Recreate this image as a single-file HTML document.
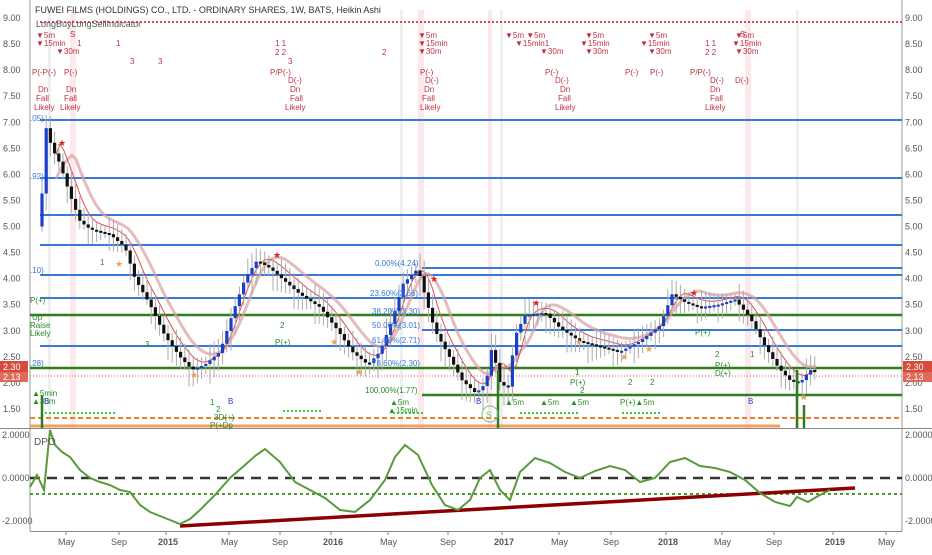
<!DOCTYPE html><html><head><style>
body{margin:0;background:#fff;width:932px;height:550px;overflow:hidden;font-family:"Liberation Sans",sans-serif}
svg text{font-family:"Liberation Sans",sans-serif}
</style></head><body>
<svg id="s" width="932" height="550" xmlns="http://www.w3.org/2000/svg">
<rect width="932" height="550" fill="#fff"/>
<g fill="#fbe3e6" opacity=".8">
<rect x="70" y="10" width="6" height="418"/><rect x="418" y="10" width="6" height="418"/><rect x="488" y="10" width="4" height="418"/><rect x="745" y="10" width="6" height="418"/>
</g>
<g fill="#eef0f0"><rect x="48" y="10" width="3" height="418"/><rect x="400" y="10" width="3" height="418"/><rect x="500" y="10" width="3" height="418"/><rect x="796" y="10" width="3" height="418"/></g>
<line x1="30" y1="0" x2="30" y2="531" stroke="#999"/>
<line x1="902" y1="0" x2="902" y2="531" stroke="#999"/>
<line x1="0" y1="428.5" x2="932" y2="428.5" stroke="#888"/>
<line x1="30" y1="531.5" x2="902" y2="531.5" stroke="#888"/>
<g font-size="9" fill="#555" id="ax"></g>
<g stroke="#3a78d8" stroke-width="2">
<line x1="40" y1="120" x2="902" y2="120"/><line x1="40" y1="178" x2="902" y2="178"/><line x1="40" y1="215" x2="902" y2="215"/><line x1="40" y1="245" x2="902" y2="245"/><line x1="40" y1="275" x2="902" y2="275"/><line x1="422" y1="268" x2="902" y2="268"/><line x1="40" y1="298" x2="902" y2="298"/><line x1="422" y1="330" x2="902" y2="330"/><line x1="40" y1="346" x2="902" y2="346"/>
</g>
<g stroke="#2f7d1f" stroke-width="2.5">
<line x1="30" y1="315" x2="902" y2="315"/><line x1="30" y1="368" x2="902" y2="368"/><line x1="422" y1="395" x2="902" y2="395"/>
</g>
<line x1="30" y1="376" x2="902" y2="376" stroke="#e06060" stroke-dasharray="1,2"/>
<line x1="30" y1="418" x2="902" y2="418" stroke="#f08030" stroke-width="2" stroke-dasharray="5,3"/>
<line x1="30" y1="426" x2="780" y2="426" stroke="#f0a060" stroke-width="3"/>
<line x1="40" y1="22" x2="902" y2="22" stroke="#e02020" stroke-width="2" stroke-dasharray="2,2" opacity=".8"/>
<g id="price"></g>
<line x1="30" y1="478" x2="902" y2="478" stroke="#333" stroke-width="2.5" stroke-dasharray="10,7"/>
<line x1="30" y1="494" x2="902" y2="494" stroke="#4a9a2a" stroke-width="2" stroke-dasharray="3,3"/>
<line x1="180" y1="526" x2="855" y2="488" stroke="#8b0000" stroke-width="3.5"/>
<polyline fill="none" stroke="#5a9a3a" stroke-width="2" points="30,487 37,475 44,490 50,430 55,445 62,452 70,457 80,470 90,478 100,482 110,485 120,490 130,492 140,505 150,512 160,516 170,520 180,524 190,519 200,510 215,495 230,478 245,465 255,456 265,449 280,462 295,482 310,490 325,498 340,510 355,512 370,500 385,480 395,457 405,445 418,455 432,485 445,505 458,510 470,500 480,478 490,470 500,490 510,500 520,472 535,458 550,463 565,472 580,478 595,471 610,466 625,470 640,482 655,478 670,462 685,458 700,466 715,468 730,472 745,480 760,493 775,502 790,506 797,497 808,502 818,496 830,490"/>
<text x="34" y="445" font-size="10" fill="#555">DPO</text>
<text x="35" y="13" font-size="9" fill="#333">FUWEI FILMS (HOLDINGS) CO., LTD. - ORDINARY SHARES, 1W, BATS, Heikin Ashi</text>
<text x="36" y="27" font-size="9" fill="#555">LongBuyLongSellIndicator</text>
<g font-size="8" fill="#c03040" id="lbl"></g>
<rect x="903" y="361" width="29" height="11" fill="#d84a3a"/><text x="906" y="370" font-size="9" fill="#fff">2.30</text>
<rect x="903" y="372" width="29" height="10" fill="#e06a5a"/><text x="906" y="380" font-size="9" fill="#fff">2.13</text>
<rect x="0" y="361" width="28" height="11" fill="#d84a3a"/><text x="3" y="370" font-size="9" fill="#fff">2.30</text>
<rect x="0" y="372" width="28" height="10" fill="#e06a5a"/><text x="3" y="380" font-size="9" fill="#fff">2.13</text>
</svg>
<script>
var NS="http://www.w3.org/2000/svg",s=document.getElementById('s');
function el(t,a,p,txt){var e=document.createElementNS(NS,t);for(var k in a)e.setAttribute(k,a[k]);if(txt!=null)e.textContent=txt;(p||s).appendChild(e);return e;}
var ax=document.getElementById('ax');
function py(p){return 18+(9-p)*52.13;}
for(var p=1.5;p<=9.01;p+=0.5){var y=py(p);el('text',{x:905,y:y+3},ax,p.toFixed(2));el('text',{x:3,y:y+3},ax,p.toFixed(2));}
[[2,435],[0,478],[-2,521]].forEach(function(a){var t=(a[0]<0?'-':'')+Math.abs(a[0]).toFixed(4);el('text',{x:905,y:a[1]+3},ax,t);el('text',{x:2,y:a[1]+3},ax,t);});
[["May",66],["Sep",119],["2015",166],["May",229],["Sep",280],["2016",331],["May",388],["Sep",448],["2017",502],["May",559],["Sep",611],["2018",666],["May",722],["Sep",774],["2019",833],["May",886]].forEach(function(a){el('text',{x:a[1]-8,y:545,'font-weight':a[0].length==4?'bold':'normal'},ax,a[0]);el('line',{x1:a[1],y1:531,x2:a[1],y2:535,stroke:'#888'});});
var pts=[[40,5.0],[46,6.9],[52,6.5],[60,6.2],[70,5.6],[80,5.1],[90,4.95],[110,4.85],[125,4.6],[135,4.0],[150,3.5],[165,2.9],[180,2.5],[192,2.25],[205,2.35],[220,2.6],[232,3.3],[245,4.0],[257,4.35],[270,4.2],[285,3.95],[300,3.7],[320,3.45],[338,3.0],[352,2.6],[368,2.35],[380,2.6],[392,3.2],[403,3.9],[418,4.2],[426,3.6],[435,3.0],[448,2.55],[462,2.05],[476,1.8],[486,2.0],[492,2.7],[500,2.0],[508,1.9],[515,2.9],[525,3.3],[545,3.35],[560,3.05],[580,2.8],[600,2.7],[620,2.6],[640,2.8],[660,3.1],[672,3.7],[685,3.55],[700,3.45],[718,3.5],[735,3.6],[750,3.25],[765,2.7],[778,2.3],[790,2.05],[800,2.0],[810,2.25],[818,2.2]];
var pg=document.getElementById('price');
function interp(x){if(x<=pts[0][0])return pts[0][1];for(var i=1;i<pts.length;i++)if(pts[i][0]>=x){var a=pts[i-1],b=pts[i],t=(x-a[0])/(b[0]-a[0]);return a[1]+t*(b[1]-a[1]);}return pts[pts.length-1][1];}
function avg(x,w){var s2=0,n=0;for(var k=x-w;k<=x;k+=2){s2+=interp(k);n++;}return s2/n;}
var m1='',m2='',m3='';for(var x=56;x<=818;x+=4){m1+=x+','+py(avg(x,16)+0.1)+' ';m2+=x+','+py(avg(x,30)+0.2)+' ';}
el('polyline',{points:m2,fill:'none',stroke:'#d8a0a0','stroke-width':3,opacity:.7},pg);
el('polyline',{points:m1,fill:'none',stroke:'#e05050','stroke-width':1},pg);
var prev=interp(40);
for(var x=42;x<=818;x+=4.2){var c=interp(x),o=prev,h=Math.max(o,c)+0.12+((x*7)%5)*0.04,l=Math.min(o,c)-0.1-((x*3)%7)*0.04;
el('line',{x1:x,y1:py(h),x2:x,y2:py(l),stroke:'#aaa','stroke-width':1},pg);
var up=c>=o;el('rect',{x:x-1.6,y:py(Math.max(o,c)),width:3.2,height:Math.max(2,Math.abs(py(o)-py(c))),fill:up?'#1a3fc8':'#111'},pg);prev=c;}
var lb=document.getElementById('lbl');
[["▼5m",36,38],["S",70,37],["▼15min",36,46],["1",77,46],["▼30m",56,54],["1",116,46],["3",130,64],["3",158,64],["P(-P(-)",32,75],["P(-)",64,75],["Dn",38,92],["Fall",36,101],["Likely",34,110],["Dn",66,92],["Fall",64,101],["Likely",60,110],["1 1",275,46],["2 2",275,55],["3",288,64],["P/P(-)",270,75],["D(-)",288,83],["Dn",290,92],["Fall",290,101],["Likely",285,110],["▼5m",418,38],["▼15min",418,46],["▼30m",418,54],["P(-)",420,75],["D(-)",425,83],["Dn",424,92],["Fall",422,101],["Likely",420,110],["▼5m ▼5m",505,38],["▼15min1",515,46],["▼30m",540,54],["P(-)",545,75],["D(-)",555,83],["Dn",560,92],["Fall",558,101],["Likely",555,110],["▼5m",585,38],["▼15min",580,46],["▼30m",585,54],["▼5m",648,38],["▼15min",640,46],["▼30m",648,54],["P(-)",625,75],["P(-)",650,75],["1 1",705,46],["2 2",705,55],["P/P(-)",690,75],["D(-)",710,83],["Dn",710,92],["Fall",710,101],["Likely",705,110],["▼5m",735,38],["▼15min",732,46],["▼30m",735,54],["S",740,37],["D(-)",735,83],["2",382,55]].forEach(function(a){el('text',{x:a[1],y:a[2]},lb,a[0]);});
[["P(+)",30,303],["Up",32,320],["Raise",30,328],["Likely",30,336],["3",145,347],["1",100,265],["2",280,328],["P(+)",275,345],["▲5m",390,405],["▲15min",388,413],["▲5m",505,405],["▲5m",540,405],["▲5m",570,405],["P(+)",695,335],["P(+)",570,385],["1",575,375],["2",580,393],["2",628,385],["2",650,385],["P(+)▲5m",620,405],["1",750,357],["2",715,357],["D(+)",715,376],["P(+)",715,368],["1",210,405],["2",216,412],["3D(+)",214,420],["P(+Dp",210,428],["100.00%(1.77)",365,393],["▲5min",32,396],["▲30m",32,404]].forEach(function(a){el('text',{x:a[1],y:a[2],fill:'#2a8a2a','font-size':8},s,a[0]);});
[["0.00%(4.24)",375,266],["23.60%(3.66)",370,296],["38.20%(3.30)",372,314],["50.00%(3.01)",372,328],["61.80%(2.71)",372,343],["78.60%(2.30)",372,366],[".05)",30,121],[".92)",30,179],[".10)",30,273],[".28)",30,366]].forEach(function(a){el('text',{x:a[1],y:a[2],fill:'#3a78d8','font-size':8},s,a[0]);});
[["B",228,404],["B",476,404],["B",748,404],["B",44,404]].forEach(function(a){el('text',{x:a[1],y:a[2],fill:'#2040c0','font-size':8},s,a[0]);});
[[58,146],[273,258],[430,282],[532,306],[690,296]].forEach(function(a){el('text',{x:a[0],y:a[1],fill:'#e02020','font-size':9},s,'★');});
[[115,267],[190,378],[330,345],[355,375],[575,345],[620,360],[645,352],[800,400]].forEach(function(a){el('text',{x:a[0],y:a[1],fill:'#f0a050','font-size':9},s,'★');});
[[45,413,70],[283,411,40],[393,413,30],[520,413,60],[622,413,40]].forEach(function(a){el('line',{x1:a[0],y1:a[1],x2:a[0]+a[2],y2:a[1],stroke:'#30d030','stroke-width':2,'stroke-dasharray':'2,2'});});
[[42,395,428],[498,370,428],[797,370,428],[804,405,428]].forEach(function(a){el('line',{x1:a[0],y1:a[1],x2:a[0],y2:a[2],stroke:'#2f7d1f','stroke-width':2.5});});
el('circle',{cx:490,cy:414,r:8,fill:'none',stroke:'#7ac07a'});el('text',{x:486,y:418,fill:'#7ac07a','font-size':9},s,'S');
</script>
</body></html>
